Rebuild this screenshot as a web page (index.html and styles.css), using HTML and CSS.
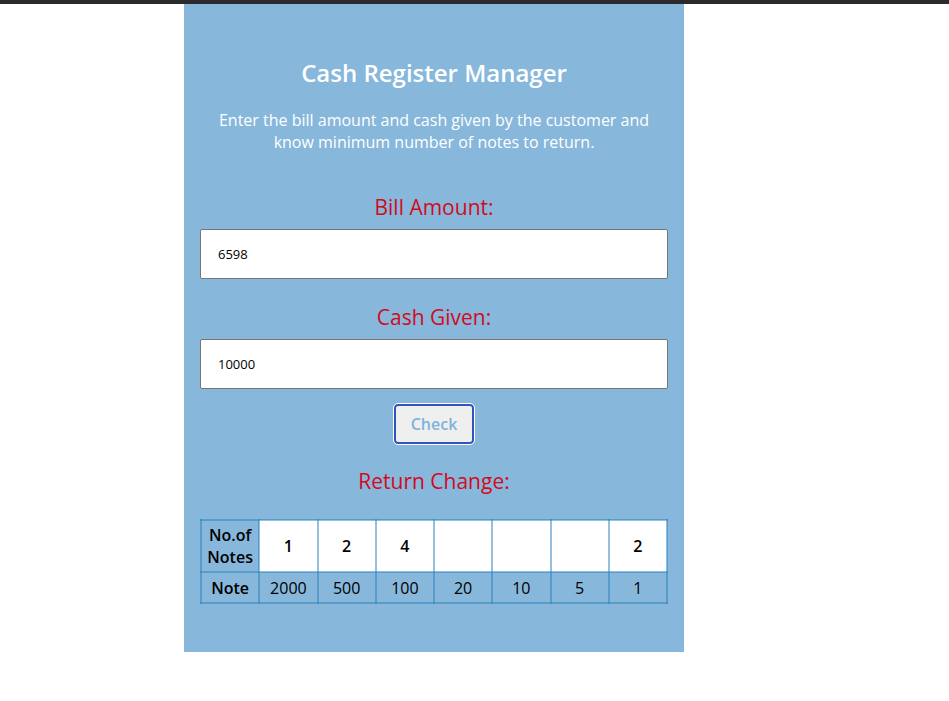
FILE: index.html
```html
<!DOCTYPE html>
<html lang="en">
<head>
<meta charset="utf-8">
<meta name="viewport" content="width=device-width, initial-scale=1">
<title>Cash Register Manager</title>
<link rel="stylesheet" href="styles.css">
</head>
<body>
<main class="register">
  <h1 class="title">Cash Register Manager</h1>
  <p class="intro">Enter the bill amount and cash given by the customer and know minimum number of notes to return.</p>
  <form class="form">
    <label class="label" for="bill">Bill Amount:</label>
    <input class="field" id="bill" type="text" inputmode="numeric" value="6598">
    <label class="label" for="cash">Cash Given:</label>
    <input class="field" id="cash" type="text" inputmode="numeric" value="10000">
    <button class="check" type="button">Check</button>
  </form>
  <table class="change">
    <caption class="label caption">Return Change:</caption>
    <tbody>
      <tr class="counts"><th scope="row">No.of Notes</th><td>1</td><td>2</td><td>4</td><td></td><td></td><td></td><td>2</td></tr>
      <tr class="notes"><th scope="row">Note</th><td>2000</td><td>500</td><td>100</td><td>20</td><td>10</td><td>5</td><td>1</td></tr>
    </tbody>
  </table>
</main>
</body>
</html>
```
FILE: styles.css
```css
* {
  box-sizing: border-box;
}

body {
  margin: 0;
  border-top: 4px solid #2b2b2d;
  background: #fff;
  color: #000;
  font-family: "Open Sans", sans-serif;
  font-size: 16px;
  line-height: 22px;
}

.register {
  max-width: 500px;
  margin-left: 184px;
  padding: 52px 16px 48px;
  background: #87b7db;
  text-align: center;
}

.title {
  margin: 0 0 20px;
  color: #fff;
  font-size: 24px;
  font-weight: 700;
  font-weight: 600;
  line-height: 33px;
}

.intro {
  margin: 0 0 40px;
  color: #fff;
}

.form {
  display: flex;
  flex-direction: column;
  align-items: center;
}

.label {
  color: #d30a1c;
  font-size: 21px;
  line-height: 28px;
}

.field {
  width: 100%;
  height: 50px;
  margin: 8px 0 24px;
  padding: 0 17px;
  border: 1px solid #767676;
  border-radius: 2px;
  background: #fff;
  color: #000;
  font: 13px "Open Sans", sans-serif;
}

.check {
  height: 40px;
  margin: -9px 0 23px;
  padding: 0 15px;
  border: 2px solid #2f55bd;
  border-radius: 4px;
  outline: 1px solid #fff;
  background: #efefef;
  color: #80b3da;
  font: 600 16px "Open Sans", sans-serif;
}

.change {
  width: 100%;
  table-layout: fixed;
  border-collapse: collapse;
}

.caption {
  padding-bottom: 24px;
}

.change th,
.change td {
  padding: 3px;
  border: 2px solid rgba(42, 130, 190, 0.5);
}

.change th {
  font-weight: 600;
}

.counts td {
  background: #fff;
  font-weight: 600;
}

.notes {
  height: 31px;
}
```
